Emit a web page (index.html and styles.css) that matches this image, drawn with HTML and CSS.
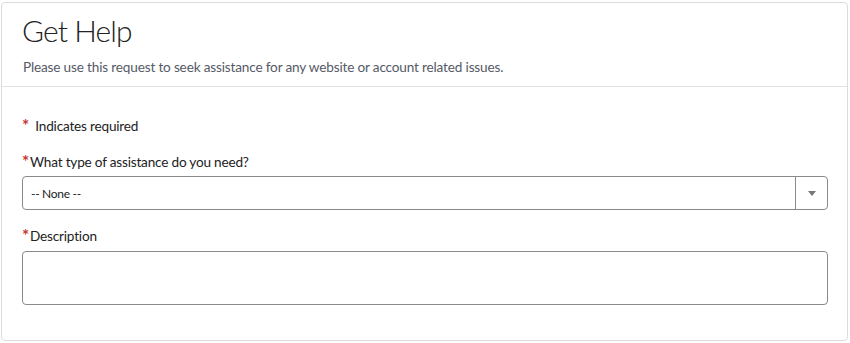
FILE: index.html
```html
<!DOCTYPE html>
<html lang="en">
<head>
    <meta charset="UTF-8" />
    <meta name="viewport" content="width=device-width, initial-scale=1" />
    <title>Get Help</title>
    <link rel="stylesheet" href="styles.css">
</head>
<body>
    <div class="card">
        <div class="card-header">
            <h1>Get Help</h1>
            <p class="intro">Please use this request to seek assistance for any website or account related issues.</p>
        </div>
        <form class="card-body" novalidate>
            <div class="required-note"><span class="req">*</span> Indicates required</div>

            <div class="field">
                <label for="type"><span class="req">*</span>What type of assistance do you need?</label>
                <div class="select">
                    <span class="select-value">-- None --</span>
                    <span class="select-arrow"><span class="caret"></span></span>
                </div>
            </div>

            <div class="field">
                <label for="desc"><span class="req">*</span>Description</label>
                <textarea id="desc" name="desc"></textarea>
            </div>
        </form>
    </div>
</body>
</html>
```

FILE: styles.css
```css
body {
    font-family: Lato, "Open Sans", sans-serif;
    background: #fff;
    margin: 0;
    padding: 2px 2px 0 1px;
}

.card {
    border: 1px solid #dcdcdc;
    border-radius: 4px;
    height: 339px;
    box-sizing: border-box;
    background: #fff;
}

.card-header {
    padding: 9px 19px 0 20px;
    height: 84px;
    border-bottom: 1px solid #dfe3e6;
    box-sizing: border-box;
}

.card-header h1 {
    margin: 0;
    font-weight: 300;
    font-size: 30px;
    letter-spacing: -0.9px;
    line-height: 36px;
    color: #222;
}

.intro {
    margin: 11px 0 0 1px;
    font-size: 13.6px;
    letter-spacing: -0.17px;
    color: #555a66;
}

.card-body {
    padding: 29px 19px 0 20px;
    display: flex;
    flex-direction: column;
    font-size: 13.6px;
    letter-spacing: -0.2px;
}

.req {
    color: #c23934;
    font-weight: bold;
    font-size: 17px;
    line-height: 10px;
    vertical-align: -1px;
    margin-right: 1px;
}

.required-note {
    color: #222;
    line-height: 20px;
}

.required-note .req {
    margin-right: 3px;
}

.field {
    margin-top: 16px;
    display: flex;
    flex-direction: column;
}

.field label {
    line-height: 20px;
    color: #222;
    margin-bottom: 4px;
}

.select {
    display: flex;
    height: 34px;
    border: 1px solid #8a8a8a;
    border-radius: 4px;
    box-sizing: border-box;
    align-items: stretch;
}

.select-value {
    flex: 1;
    display: flex;
    align-items: center;
    padding-left: 8px;
    font-size: 12px;
    letter-spacing: -0.3px;
    color: #222;
}

.select-arrow {
    width: 31px;
    border-left: 1px solid #8a8a8a;
    display: flex;
    align-items: center;
    justify-content: center;
}

.caret {
    width: 0;
    height: 0;
    border-left: 4px solid transparent;
    border-right: 4px solid transparent;
    border-top: 5px solid #777;
}

textarea {
    height: 54px;
    margin: 1px 0 0 0;
    border: 1px solid #8a8a8a;
    border-radius: 4px;
    box-sizing: border-box;
    resize: none;
    font-family: inherit;
}
```
